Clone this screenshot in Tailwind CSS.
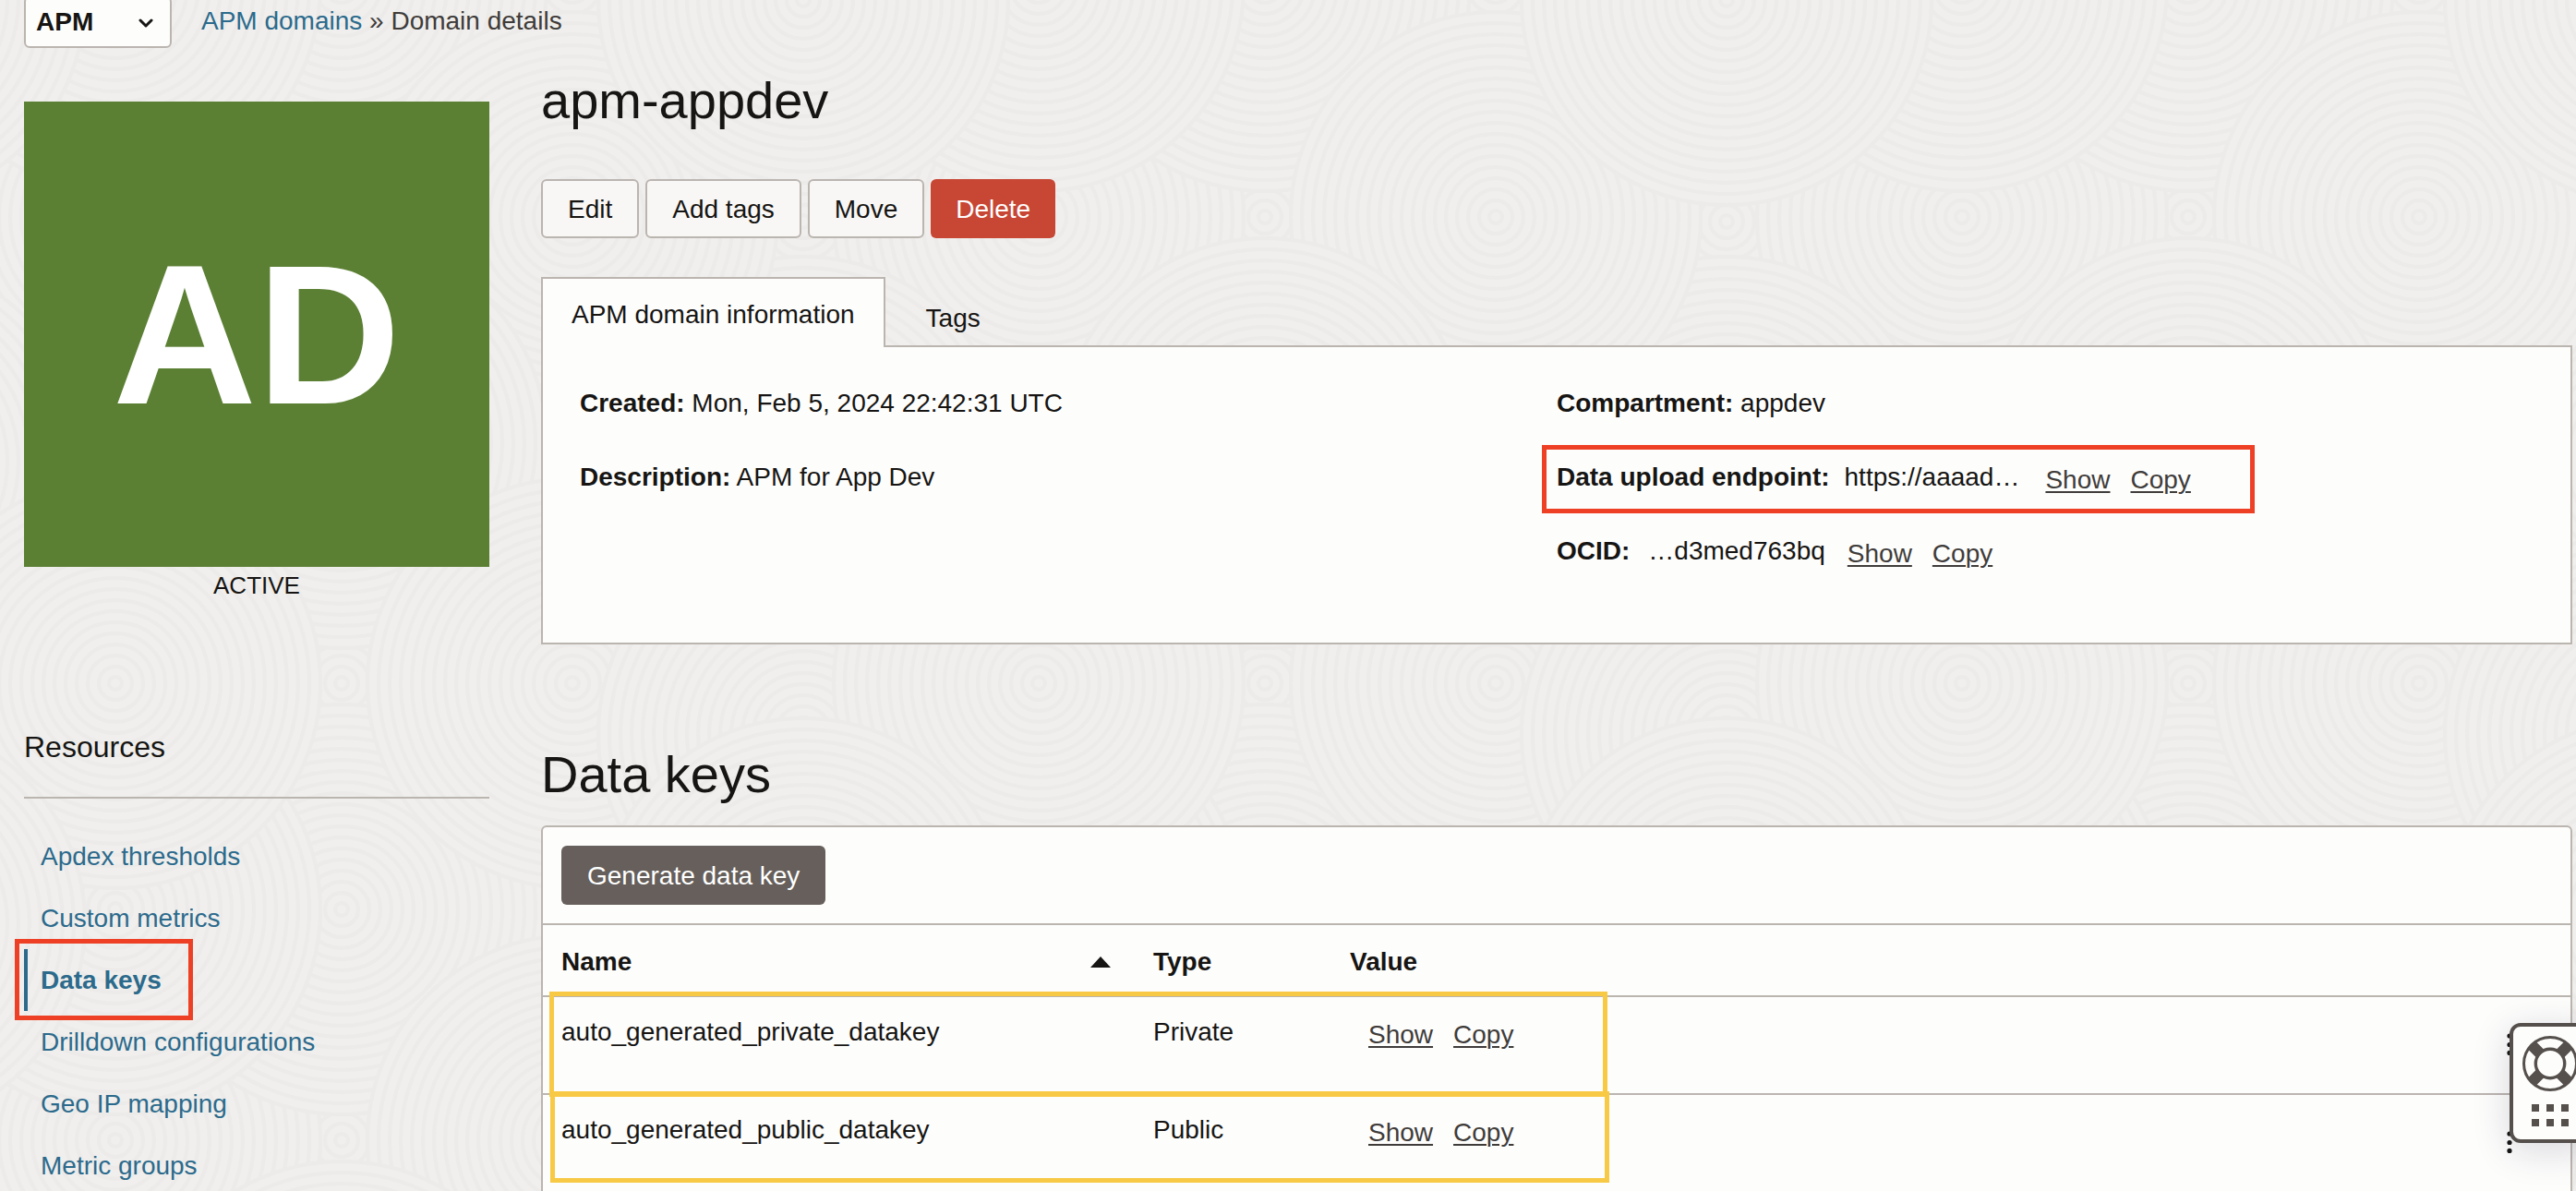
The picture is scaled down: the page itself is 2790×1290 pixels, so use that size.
<!DOCTYPE html>
<html lang="en">
<head>
<meta charset="utf-8">
<meta name="viewport" content="width=device-width, initial-scale=1">
<title>Domain details</title>
<script src="https://cdn.jsdelivr.net/npm/@tailwindcss/browser@4"></script>
</head>
<body class="relative isolate h-screen overflow-hidden bg-[#f1efed] font-['Helvetica_Neue','Liberation_Sans',Arial,sans-serif] text-[28px] leading-10 text-[#161513]">

<!-- Background texture: overlapping concentric rings on a 1000px tile -->
<svg class="absolute inset-0 -z-10 h-full w-full" aria-hidden="true">
  <defs>
    <g id="rings" fill="none" stroke="#ecebe9" stroke-width="4">
      <circle r="222" fill="#f0efed"/>
      <circle r="210"/><circle r="198"/><circle r="186"/><circle r="174"/><circle r="162"/><circle r="150"/>
      <circle r="138"/><circle r="126"/><circle r="114"/><circle r="102"/><circle r="90"/><circle r="78"/>
      <circle r="66"/><circle r="54"/><circle r="42"/><circle r="30"/><circle r="18"/><circle r="7"/>
    </g>
    <pattern id="texture" width="1000" height="1000" patternUnits="userSpaceOnUse">
      <rect width="1000" height="1000" fill="#f0efed"/>
      <use href="#rings" x="370" y="235"/><use href="#rings" x="620" y="480"/>
      <use href="#rings" x="125" y="480"/><use href="#rings" x="620" y="-15"/><use href="#rings" x="620" y="985"/>
      <use href="#rings" x="370" y="740"/><use href="#rings" x="870" y="240"/><use href="#rings" x="-130" y="240"/>
      <use href="#rings" x="125" y="235"/><use href="#rings" x="1125" y="235"/>
      <use href="#rings" x="370" y="-15"/><use href="#rings" x="370" y="985"/>
      <use href="#rings" x="870" y="500"/><use href="#rings" x="-130" y="500"/>
      <use href="#rings" x="620" y="235"/><use href="#rings" x="370" y="480"/>
      <use href="#rings" x="620" y="740"/><use href="#rings" x="870" y="795"/><use href="#rings" x="-130" y="795"/>
      <use href="#rings" x="125" y="-15"/><use href="#rings" x="125" y="985"/><use href="#rings" x="1125" y="-15"/><use href="#rings" x="1125" y="985"/>
      <use href="#rings" x="125" y="740"/><use href="#rings" x="1125" y="740"/>
      <use href="#rings" x="870" y="0"/><use href="#rings" x="870" y="1000"/><use href="#rings" x="-130" y="0"/><use href="#rings" x="-130" y="1000"/>
    </pattern>
  </defs>
  <rect width="100%" height="100%" fill="url(#texture)"/>
</svg>

<header class="-mt-1 flex h-14 items-center gap-8 pl-[26px]">
  <div class="relative">
    <select aria-label="Service" class="block h-14 w-40 appearance-none rounded-md border-2 border-[#bbb5b0] bg-[#fdfdfc] pl-[11px] font-bold">
      <option>APM</option>
    </select>
    <svg class="pointer-events-none absolute top-6 right-5 h-3 w-4" viewBox="0 0 16 12" fill="none" stroke="#161513" stroke-width="3" stroke-linecap="round" stroke-linejoin="round" aria-hidden="true"><path d="M2 2l6 6 6-6"/></svg>
  </div>
  <nav class="pb-[2px] text-[#3f3c3a]" aria-label="Breadcrumb"><a href="#" class="text-[#2c6a8c]">APM domains</a> » Domain details</nav>
</header>

<div class="flex gap-14 pr-1 pl-[26px]">
  <aside class="w-[504px] shrink-0 pt-[58px]">
    <div class="flex aspect-square items-center justify-center bg-[#5b8034] text-[216px] leading-none font-bold text-white">AD</div>
    <p class="text-center text-[26px]">ACTIVE</p>

    <h2 class="mt-[135px] border-b-2 border-[#bbb5b0] pb-[34px] text-[32px]">Resources</h2>
    <ul class="mt-[29px] leading-[67px] text-[#2c6a8c]">
      <li><a href="#" class="block pl-[18px]">Apdex thresholds</a></li>
      <li><a href="#" class="block pl-[18px]">Custom metrics</a></li>
      <li class="relative">
        <a href="#" aria-current="page" class="block border-l-4 border-[#2c6a8c] pl-[14px] font-bold">Data keys</a>
        <span class="pointer-events-none absolute -top-[11px] -left-[10px] h-[88px] w-[193px] border-5 border-[#ee4025]"></span>
      </li>
      <li><a href="#" class="block pl-[18px]">Drilldown configurations</a></li>
      <li><a href="#" class="block pl-[18px]">Geo IP mapping</a></li>
      <li><a href="#" class="block pl-[18px]">Metric groups</a></li>
    </ul>
  </aside>

  <main class="min-w-0 flex-1 pt-[25px]">
    <h1 class="text-[56px] leading-16">apm-appdev</h1>

    <div class="mt-[53px] flex gap-[7px]">
      <button class="h-16 rounded-md border-2 border-[#bbb5b0] bg-[#f8f7f5] px-[27px] pt-[2px]">Edit</button>
      <button class="h-16 rounded-md border-2 border-[#bbb5b0] bg-[#f8f7f5] px-[27px] pt-[2px]">Add tags</button>
      <button class="h-16 rounded-md border-2 border-[#bbb5b0] bg-[#f8f7f5] px-[27px] pt-[2px]">Move</button>
      <button class="h-16 rounded-md bg-[#c74634] px-[27px] pt-[2px] text-white">Delete</button>
    </div>

    <div class="relative mt-[42px] flex items-end" role="tablist">
      <button role="tab" aria-selected="true" class="-mb-0.5 h-[76px] border-2 border-b-0 border-[#bbb5b0] bg-[#fdfdfc] px-[31px] pt-1">APM domain information</button>
      <button role="tab" aria-selected="false" class="px-11 pb-[9px]">Tags</button>
    </div>

    <section class="grid grid-cols-2 border-2 border-[#bbb5b0] bg-[#fdfdfc] px-10 pt-[41px] pb-[79px]">
      <div class="flex flex-col gap-10">
        <p><b>Created:</b> Mon, Feb 5, 2024 22:42:31 UTC</p>
        <p><b>Description:</b> APM for App Dev</p>
      </div>
      <div class="flex flex-col gap-10">
        <p><b>Compartment:</b> appdev</p>
        <div class="relative flex h-10">
          <b>Data upload endpoint:</b>
          <span class="ml-4">https://aaaad…</span>
          <button class="mt-[3px] ml-7 text-[#3f3c3a] underline decoration-2 underline-offset-3">Show</button>
          <button class="mt-[3px] ml-[22px] text-[#3f3c3a] underline decoration-2 underline-offset-3">Copy</button>
          <span class="pointer-events-none absolute -top-[15px] -left-4 h-[74px] w-[772px] border-5 border-[#ee4025]"></span>
        </div>
        <div class="flex h-10">
          <b>OCID:</b>
          <span class="ml-5">…d3med763bq</span>
          <button class="mt-[3px] ml-6 text-[#3f3c3a] underline decoration-2 underline-offset-3">Show</button>
          <button class="mt-[3px] ml-[22px] text-[#3f3c3a] underline decoration-2 underline-offset-3">Copy</button>
        </div>
      </div>
    </section>

    <h2 class="mt-[109px] text-[56px] leading-16">Data keys</h2>

    <section class="mt-[23px] rounded-t-md border-2 border-[#bbb5b0] bg-[#fdfdfc]">
      <div class="border-b-2 border-[#bbb5b0] p-5">
        <button class="block h-16 rounded-md bg-[#665f5b] px-7 pt-[2px] text-white">Generate data key</button>
      </div>
      <table class="w-full table-fixed border-separate border-spacing-0 text-left">
        <thead>
          <tr>
            <th class="w-[641px] border-b-2 border-[#bbb5b0] px-5 pt-5 pb-4" aria-sort="ascending">
              <span class="flex items-center justify-between pr-[6px]">Name
                <svg class="h-3 w-[22px]" viewBox="0 0 22 12" fill="#161513" aria-hidden="true"><path d="M11 0l11 12H0z"/></svg>
              </span>
            </th>
            <th class="w-[213px] border-b-2 border-[#bbb5b0] px-5 pt-5 pb-4">Type</th>
            <th class="border-b-2 border-[#bbb5b0] px-5 pt-5 pb-4">Value</th>
            <th class="w-[132px] border-b-2 border-[#bbb5b0]" aria-label="Actions"></th>
          </tr>
        </thead>
        <tbody>
          <tr class="relative h-[106px] align-top">
            <td class="border-b-2 border-[#bbb5b0] px-5 pt-[18px]">auto_generated_private_datakey
              <span class="pointer-events-none absolute -top-[6px] left-[7px] z-10 h-[114px] w-[1146px] border-5 border-[#f8c944]"></span>
            </td>
            <td class="border-b-2 border-[#bbb5b0] px-5 pt-[18px]">Private</td>
            <td class="border-b-2 border-[#bbb5b0] px-10 pt-[21px]">
              <span class="flex gap-[22px]">
                <button class="text-[#3f3c3a] underline decoration-2 underline-offset-3">Show</button>
                <button class="text-[#3f3c3a] underline decoration-2 underline-offset-3">Copy</button>
              </span>
            </td>
            <td class="border-b-2 border-[#bbb5b0] pt-[39px]">
              <button class="mx-auto block" aria-label="Actions"><svg class="h-6 w-[6px]" viewBox="0 0 6 24" fill="#161513"><circle cx="3" cy="3" r="2.6"/><circle cx="3" cy="12.5" r="2.6"/><circle cx="3" cy="21.4" r="2.6"/></svg></button>
            </td>
          </tr>
          <tr class="relative h-[106px] align-top">
            <td class="border-b-2 border-[#bbb5b0] px-5 pt-[18px]">auto_generated_public_datakey
              <span class="pointer-events-none absolute -top-1 left-2 z-10 h-[99px] w-[1147px] border-5 border-[#f8c944]"></span>
            </td>
            <td class="border-b-2 border-[#bbb5b0] px-5 pt-[18px]">Public</td>
            <td class="border-b-2 border-[#bbb5b0] px-10 pt-[21px]">
              <span class="flex gap-[22px]">
                <button class="text-[#3f3c3a] underline decoration-2 underline-offset-3">Show</button>
                <button class="text-[#3f3c3a] underline decoration-2 underline-offset-3">Copy</button>
              </span>
            </td>
            <td class="border-b-2 border-[#bbb5b0] pt-[39px]">
              <button class="mx-auto block" aria-label="Actions"><svg class="h-6 w-[6px]" viewBox="0 0 6 24" fill="#161513"><circle cx="3" cy="3" r="2.6"/><circle cx="3" cy="12.5" r="2.6"/><circle cx="3" cy="21.4" r="2.6"/></svg></button>
            </td>
          </tr>
        </tbody>
      </table>
    </section>
  </main>
</div>

<!-- Floating help widget docked to the right edge -->
<button class="absolute -right-4 bottom-[52px] z-20 flex h-[130px] w-22 flex-col items-start gap-[14px] rounded-xl border-4 border-[#55504c] bg-[#fdfdfc] pt-[10px] pl-[10px] shadow-[0_8px_40px_rgba(22,21,60,0.16)]" aria-label="Help">
  <svg class="h-15 w-15 shrink-0" viewBox="0 0 60 60" aria-hidden="true">
    <g fill="none" stroke="#55504c">
      <circle cx="30" cy="30" r="28.5" stroke-width="3"/>
      <path d="M10 10L19 19M50 10L41 19M10 50L19 41M50 50L41 41" stroke-width="12"/>
      <circle cx="30" cy="30" r="15.700" stroke-width="3.400"/>
    </g>
  </svg>
  <svg class="ml-[10px] h-6 w-10 shrink-0" viewBox="0 0 40 24" fill="#55504c" aria-hidden="true"><path d="M0 0h8v8H0zM16 0h8v8h-8zM32 0h8v8h-8zM0 16h8v8H0zM16 16h8v8h-8zM32 16h8v8h-8z"/></svg>
</button>
</body>
</html>
